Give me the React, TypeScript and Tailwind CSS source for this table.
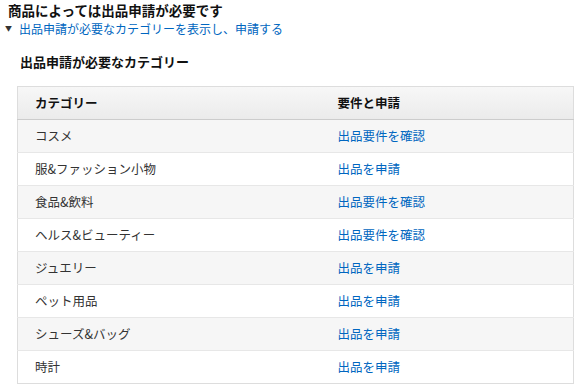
const rows: [string, string][] = [
  ['コスメ', '出品要件を確認'],
  ['服&ファッション小物', '出品を申請'],
  ['食品&飲料', '出品要件を確認'],
  ['ヘルス&ビューティー', '出品要件を確認'],
  ['ジュエリー', '出品を申請'],
  ['ペット用品', '出品を申請'],
  ['シューズ&バッグ', '出品を申請'],
  ['時計', '出品を申請'],
]

export default function App() {
  return (
    <div className="h-[388px] w-[578px] bg-white font-['Noto_Sans_CJK_JP',sans-serif] text-[12.5px] text-[#111]">
      <div className="pl-[8px] pt-[2px] text-[13.5px] font-bold leading-[17px]">商品によっては出品申請が必要です</div>
      <div className="flex items-center pl-[5px] leading-[17px]">
        <span className="mr-[7px] mt-[1px] text-[7px] text-[#333]">▼</span>
        <a className="text-[12px] text-[#0066c0]">出品申請が必要なカテゴリーを表示し、申請する</a>
      </div>
      <div className="mt-[16px] pl-[20px] text-[13px] font-bold leading-[17px]">出品申請が必要なカテゴリー</div>

      <table className="ml-[17px] mt-[16px] w-[557px] table-fixed border-collapse border border-[#ddd]">
        <colgroup>
          <col className="w-[320px]" />
          <col />
        </colgroup>
        <thead>
          <tr className="h-[33px] border-b border-[#ccc] bg-gradient-to-b from-[#f7f7f7] to-[#ebebeb]">
            <th className="pl-[17px] text-left font-bold">カテゴリー</th>
            <th className="text-left font-bold">要件と申請</th>
          </tr>
        </thead>
        <tbody>
          {rows.map(([cat, action], i) => (
            <tr
              key={cat}
              className={`h-[33px] border-t border-[#e7e7e7] ${i % 2 === 0 ? 'bg-[#f6f6f6]' : 'bg-white'}`}
            >
              <td className="pl-[17px] text-[#333]">{cat}</td>
              <td className="text-[#0066c0]">{action}</td>
            </tr>
          ))}
        </tbody>
      </table>
    </div>
  )
}
